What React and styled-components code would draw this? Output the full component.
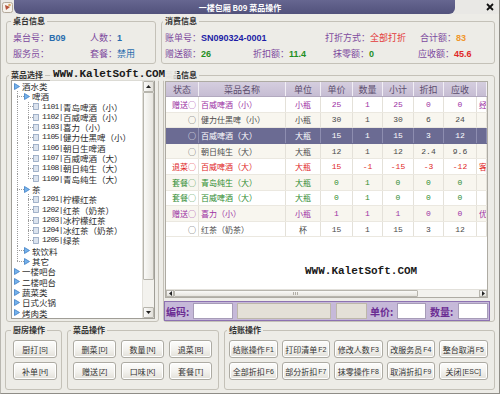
import React from 'react';
import styled, { createGlobalStyle } from 'styled-components';

const CJK = `"Noto Sans CJK SC", "Noto Sans", sans-serif`;
const SANS = `"Liberation Sans", "Noto Sans CJK SC", sans-serif`;
const MONO = `"Liberation Mono", "Noto Sans CJK SC", monospace`;

const GlobalStyle = createGlobalStyle`
  html, body { margin: 0; padding: 0; background: #edece7; }
  body { font-family: ${CJK}; color: #333; }
  * { box-sizing: border-box; }
`;

const tones = {
  gift: '#9b2fa3',
  normal: '#4a4a4a',
  back: '#e02626',
  set: '#2f8c2f',
  selected: '#ffffff',
};

const treeItems = [
  { lv: 0, label: '酒水类' },
  { lv: 1, label: '啤酒' },
  { lv: 2, code: '1101', label: '青岛啤酒（小）' },
  { lv: 2, code: '1102', label: '百威啤酒（小）' },
  { lv: 2, code: '1103', label: '喜力（小）' },
  { lv: 2, code: '1105', label: '健力仕黑啤（小）' },
  { lv: 2, code: '1106', label: '朝日生啤酒' },
  { lv: 2, code: '1107', label: '百威啤酒（大）' },
  { lv: 2, code: '1108', label: '朝日纯生（大）' },
  { lv: 2, code: '1109', label: '青岛纯生（大）', last: true },
  { lv: 1, label: '茶' },
  { lv: 2, code: '1201', label: '柠檬红茶' },
  { lv: 2, code: '1202', label: '红茶（奶茶）' },
  { lv: 2, code: '1203', label: '冰柠檬红茶' },
  { lv: 2, code: '1204', label: '冰红茶（奶茶）' },
  { lv: 2, code: '1205', label: '绿茶', last: true },
  { lv: 1, label: '软饮料' },
  { lv: 1, label: '其它', last: true },
  { lv: 0, label: '一楼吧台' },
  { lv: 0, label: '二楼吧台' },
  { lv: 0, label: '蔬菜类' },
  { lv: 0, label: '日式火锅' },
  { lv: 0, label: '烤肉类' },
];

const rows = [
  { st: '赠送', name: '百威啤酒（小）', unit: '小瓶', nums: ['25', '1', '25', '0', '0'], note: '经', tone: 'gift' },
  { st: '', name: '健力仕黑啤（小）', unit: '小瓶', nums: ['30', '1', '30', '6', '24'], tone: 'normal' },
  { st: '', name: '百威啤酒（大）', unit: '大瓶', nums: ['15', '1', '15', '3', '12'], tone: 'selected' },
  { st: '', name: '朝日纯生（大）', unit: '大瓶', nums: ['12', '1', '12', '2.4', '9.6'], tone: 'normal' },
  { st: '退菜', name: '百威啤酒（大）', unit: '大瓶', nums: ['15', '-1', '-15', '-3', '-12'], note: '客', tone: 'back' },
  { st: '套餐', name: '青岛纯生（大）', unit: '大瓶', nums: ['0', '1', '0', '0', '0'], tone: 'set' },
  { st: '套餐', name: '百威啤酒（大）', unit: '大瓶', nums: ['0', '1', '0', '0', '0'], tone: 'set' },
  { st: '赠送', name: '喜力（小）', unit: '小瓶', nums: ['1', '1', '1', '0', '0'], note: '优', tone: 'gift' },
  { st: '', name: '红茶（奶茶）', unit: '杯', nums: ['15', '1', '15', '3', '12'], tone: 'normal' },
];

const headers = ['状态', '菜品名称', '单位', '单价', '数量', '小计', '折扣', '应收', ''];

const payButtons = [
  ['结账操作', 'F1'], ['打印清单', 'F2'], ['修改人数', 'F3'], ['改服务员', 'F4'], ['整台取消', 'F5'],
  ['全部折扣', 'F6'], ['部分折扣', 'F7'], ['抹零操作', 'F8'], ['取消折扣', 'F9'], ['关闭', '[ESC]'],
];

const dishButtons = [
  ['删菜', '[D]'], ['数量', '[N]'], ['退菜', '[B]'],
  ['赠送', '[Z]'], ['口味', '[K]'], ['套餐', '[T]'],
];

function TreeLine({ item }) {
  if (item.lv === 0) {
    return (
      <TreeRow>
        <Caret viewBox="0 0 6 7"><polygon points="0.5,0.5 5.5,3.5 0.5,6.5" /></Caret>
        {item.label}
      </TreeRow>
    );
  }
  if (item.lv === 1) {
    return (
      <TreeRow>
        <Indent $w={10} $x={3} $branch $last={item.last} />
        <Caret viewBox="0 0 6 7"><polygon points="0.5,0.5 5.5,3.5 0.5,6.5" /></Caret>
        {item.label}
      </TreeRow>
    );
  }
  return (
    <TreeRow>
      <Indent $w={10} $x={3} />
      <Indent $w={9} $x={4} $branch $last={item.last} />
      <Doc viewBox="0 0 6 7"><rect x="0.5" y="0.5" width="5" height="6" /></Doc>
      <Code>{item.code}|</Code>
      {item.label}
    </TreeRow>
  );
}

export default function App() {
  return (
    <>
      <GlobalStyle />
      <Window>
        <TitleBar>
          <AppIcon>
            <svg width="11" height="11" viewBox="0 0 11 11">
              <rect x="0.5" y="0.5" width="10" height="10" rx="2" fill="#f6f2ec" stroke="#b3a99a" />
              <path d="M3 3 L8 5 L4 8 Z" fill="#b5523a" />
              <circle cx="7.5" cy="3" r="1.3" fill="#d9a25a" />
            </svg>
          </AppIcon>
          <TitleBand>一楼包厢 B09 菜品操作</TitleBand>
          <CloseArea>
            <svg width="8" height="8" viewBox="0 0 8 8">
              <path d="M1 1 L7 7 M7 1 L1 7" stroke="#111" strokeWidth="1.8" />
            </svg>
          </CloseArea>
        </TitleBar>

        <TopRow>
          <Group $w={150} $pad="6px 4px 0 6px">
            <Legend>桌台信息</Legend>
            <InfoRow>
              <Field $w={77}><Label>桌台号：</Label><Value $c="#2a6cae" $bold>B09</Value></Field>
              <Field><Label>人数：</Label><Value $c="#2a6cae" $bold>1</Value></Field>
            </InfoRow>
            <InfoRow>
              <Field $w={77}><Label>服务员：</Label></Field>
              <Field><Label>套餐：</Label><Value $c="#2a6cae">禁用</Value></Field>
            </InfoRow>
          </Group>
          <Group $grow $pad="6px 4px 0 3px">
            <Legend>消费信息</Legend>
            <InfoRow>
              <Field $w={160}><Label>账单号：</Label><Value $c="#1c1ca6" $bold>SN090324-0001</Value></Field>
              <Field $w={95}><Label>打折方式：</Label><Value $c="#e33a3a">全部打折</Value></Field>
              <Field><Label>合计额：</Label><Value $c="#f0962a" $bold>83</Value></Field>
            </InfoRow>
            <InfoRow>
              <Field $w={88}><Label>赠送额：</Label><Value $c="#1f8f1f" $bold>26</Value></Field>
              <Field $w={80}><Label>折扣额：</Label><Value $c="#1f8f1f" $bold>11.4</Value></Field>
              <Field $w={85}><Label>抹零额：</Label><Value $c="#1f8f1f" $bold>0</Value></Field>
              <Field><Label>应收额：</Label><Value $c="#e02828" $bold>45.6</Value></Field>
            </InfoRow>
          </Group>
        </TopRow>

        <MidRow>
          <Group $w={153} $pad="0 3px 2px 4px">
            <Legend>菜品选择</Legend>
            <Tree>
              <TreeList>
                {treeItems.map((item, i) => <TreeLine key={i} item={item} />)}
              </TreeList>
              <VScroll>
                <ScrollBtn><svg width="5" height="3" viewBox="0 0 5 3"><polygon points="0,3 2.5,0 5,3" fill="#222" /></svg></ScrollBtn>
                <VThumb />
                <Track />
                <ScrollBtn><svg width="5" height="3" viewBox="0 0 5 3"><polygon points="0,0 2.5,3 5,0" fill="#222" /></svg></ScrollBtn>
              </VScroll>
            </Tree>
          </Group>

          <Group $grow $pad="1px 6px 0 1px">
            <Legend><Faded>菜</Faded>品信息</Legend>
            <TableBox>
              <HeadRow>
                {headers.map((h, i) => <HeadCell key={i}>{h}</HeadCell>)}
              </HeadRow>
              {rows.map((r, i) => {
                const sel = r.tone === 'selected';
                return (
                  <Row key={i} $alt={i % 2 === 1} $sel={sel} $tone={r.tone}>
                    <Cell $sel={sel} $align="flex-end">{r.st}○</Cell>
                    <Cell $sel={sel} $align="flex-start">{r.name}</Cell>
                    <Cell $sel={sel}>{r.unit}</Cell>
                    {r.nums.map((n, j) => <Cell key={j} $sel={sel} $num>{n}</Cell>)}
                    <Cell $sel={sel} $align="flex-start">{r.note || ''}</Cell>
                  </Row>
                );
              })}
              <TableFill>
                <Mark>WWW.KaletSoft.COM</Mark>
              </TableFill>
              <HScroll>
                <HBtn><svg width="3" height="5" viewBox="0 0 3 5"><polygon points="3,0 0,2.5 3,5" fill="#222" /></svg></HBtn>
                <HThumb><Grip /></HThumb>
                <Track />
                <HBtn><svg width="3" height="5" viewBox="0 0 3 5"><polygon points="0,0 3,2.5 0,5" fill="#222" /></svg></HBtn>
              </HScroll>
            </TableBox>
            <InputBar>
              <BarLabel $w={27}>编码:</BarLabel>
              <BarInput $w={40} />
              <BarBox $w={94} $gap={4} />
              <BarBox $w={31} $gap={5} />
              <BarLabel $w={27} $gap={3}>单价:</BarLabel>
              <BarInput $w={29} />
              <BarLabel $w={28} $gap={4}>数量:</BarLabel>
              <BarInput $w={30} />
            </InputBar>
          </Group>
        </MidRow>

        <BottomRow>
          <Group $w={57} $pad="5px 4px 0 7px">
            <Legend>厨房操作</Legend>
            <ButtonGrid $cols="44px">
              <Btn>厨打<Key>[S]</Key></Btn>
              <Btn>补单<Key>[H]</Key></Btn>
            </ButtonGrid>
          </Group>
          <Group $w={152} $pad="5px 6px 0 5px">
            <Legend>菜品操作</Legend>
            <ButtonGrid $cols="repeat(3, 43px)" $gap={5}>
              {dishButtons.map(([t, k]) => <Btn key={t}>{t}<Key>{k}</Key></Btn>)}
            </ButtonGrid>
          </Group>
          <Group $grow $pad="5px 4px 0 4px">
            <Legend>结账操作</Legend>
            <ButtonGrid $cols="repeat(5, 48.5px)" $gap={4}>
              {payButtons.map(([t, k]) => <Btn key={t}>{t} <Key>{k}</Key></Btn>)}
            </ButtonGrid>
          </Group>
        </BottomRow>

        <Watermark>WWW.KaletSoft.COM</Watermark>
      </Window>
    </>
  );
}

const Window = styled.div`
  position: relative;
  display: flex;
  flex-direction: column;
  width: 500px;
  height: 394px;
  overflow: hidden;
  background: #edece7;
  border-left: 1px solid #b9b7b0;
  border-right: 1px solid #8f8d87;
  border-bottom: 1px solid #8f8d87;
`;

const TitleBar = styled.div`
  display: flex;
  flex-shrink: 0;
  height: 14px;
  margin-bottom: 2px;
  background: #e9e8e5;
`;

const AppIcon = styled.div`
  display: flex;
  align-items: center;
  justify-content: center;
  width: 13px;
`;

const TitleBand = styled.div`
  display: flex;
  align-items: center;
  justify-content: center;
  flex: 1;
  padding-left: 11px;
  border-radius: 0 0 6px 6px;
  background: linear-gradient(#666690, #52527c);
  color: #fff;
  font-size: 8px;
  font-weight: bold;
  white-space: nowrap;
`;

const CloseArea = styled.div`
  display: flex;
  align-items: center;
  justify-content: flex-end;
  width: 44px;
  padding-right: 5px;
`;

const TopRow = styled.div`
  display: flex;
  gap: 5px;
  height: 48px;
  flex-shrink: 0;
  padding: 0 4px 0 5px;
`;

const MidRow = styled.div`
  display: flex;
  gap: 4px;
  height: 252px;
  flex-shrink: 0;
  margin-top: 6px;
  padding: 0 4px 0 5px;
`;

const BottomRow = styled.div`
  display: flex;
  gap: 5px;
  height: 65px;
  flex-shrink: 0;
  margin-top: 3px;
  padding: 0 4px 0 4px;
`;

const Group = styled.fieldset`
  display: flex;
  flex-direction: column;
  gap: 5px;
  min-width: 0;
  margin: 0;
  width: ${p => (p.$w ? `${p.$w}px` : 'auto')};
  flex: ${p => (p.$grow ? '1' : 'none')};
  padding: ${p => p.$pad};
  border: 1px solid #c4c1b8;
  border-radius: 3px;
`;

const Legend = styled.legend`
  margin-left: -2px;
  padding: 0 2px;
  font-size: 8px;
  line-height: 10px;
  font-weight: bold;
  color: #333;
`;

const Faded = styled.span`
  color: #c9c7c2;
`;

const InfoRow = styled.div`
  display: flex;
  align-items: center;
  height: 11px;
  white-space: nowrap;
`;

const Field = styled.div`
  display: flex;
  align-items: center;
  width: ${p => (p.$w ? `${p.$w}px` : 'auto')};
  flex: ${p => (p.$w ? 'none' : '1')};
`;

const Label = styled.span`
  font-size: 9px;
  color: #7d4a9e;
`;

const Value = styled.span`
  font-family: ${SANS};
  font-size: 9px;
  font-weight: ${p => (p.$bold ? 'bold' : 'normal')};
  color: ${p => p.$c};
`;

const Tree = styled.div`
  display: flex;
  height: 239px;
  background: #fff;
  border: 1px solid #a09e97;
`;

const TreeList = styled.div`
  flex: 1;
  overflow: hidden;
  padding-left: 2px;
`;

const TreeRow = styled.div`
  display: flex;
  align-items: center;
  height: 10.3px;
  overflow: hidden;
  font-size: 8.5px;
  line-height: 10.3px;
  color: #2a2a2a;
  white-space: nowrap;
`;

const dotV = 'repeating-linear-gradient(to bottom, #9c9c9c 0 1px, transparent 1px 2px)';
const dotH = 'repeating-linear-gradient(to right, #9c9c9c 0 1px, transparent 1px 2px)';

const Indent = styled.span`
  flex-shrink: 0;
  align-self: stretch;
  width: ${p => p.$w}px;
  background-image: ${p => (p.$branch ? `${dotV}, ${dotH}` : dotV)};
  background-repeat: no-repeat;
  background-size: ${p => `1px ${p.$last ? '50%' : '100%'}${p.$branch ? `, ${p.$w - p.$x}px 1px` : ''}`};
  background-position: ${p => `${p.$x}px 0${p.$branch ? `, ${p.$x}px 50%` : ''}`};
`;

const Caret = styled.svg`
  flex-shrink: 0;
  width: 6px;
  height: 7px;
  margin-right: 2px;
  fill: #74b2ec;
  stroke: #3f7fc4;
  stroke-width: 0.8;
`;

const Doc = styled.svg`
  flex-shrink: 0;
  width: 6px;
  height: 7px;
  margin-right: 3px;
  fill: #dbe3ee;
  stroke: #8fa2bd;
  stroke-width: 0.8;
`;

const Code = styled.span`
  font-family: ${MONO};
  font-size: 8px;
  letter-spacing: -0.6px;
`;

const VScroll = styled.div`
  display: flex;
  flex-direction: column;
  width: 12px;
  background: #f3f2ee;
  border-left: 1px solid #e2e0da;
`;

const ScrollBtn = styled.div`
  display: flex;
  align-items: center;
  justify-content: center;
  height: 11px;
  background: linear-gradient(to right, #fbfbfa, #e2e0da);
  border: 1px solid #b7b5ad;
  border-radius: 1px;
`;

const VThumb = styled.div`
  height: 188px;
  background: linear-gradient(to right, #f9f9f7, #e6e4de);
  border: 1px solid #b7b5ad;
  border-radius: 1px;
`;

const Track = styled.div`
  flex: 1;
  background: #f3f2ee;
`;

const cols = '33px 87px 35px 32px 30px 31px 30px 33px 1fr';

const TableBox = styled.div`
  display: flex;
  flex-direction: column;
  height: 217px;
  background: #fff;
  border: 1px solid #aeaba3;
`;

const HeadRow = styled.div`
  display: grid;
  grid-template-columns: ${cols};
  flex-shrink: 0;
  height: 15px;
  background: linear-gradient(#d5cedf, #c6bdd3);
  border-bottom: 1px solid #b2a9bf;
`;

const HeadCell = styled.div`
  display: flex;
  align-items: center;
  justify-content: center;
  font-size: 9px;
  color: #5c4e6e;
  border-right: 1px solid #f1eef5;
`;

const Row = styled.div`
  display: grid;
  grid-template-columns: ${cols};
  flex-shrink: 0;
  height: 15.6px;
  background: ${p => (p.$sel ? '#6b6b93' : p.$alt ? '#f8f6ef' : '#ffffff')};
  color: ${p => tones[p.$tone]};
  border-bottom: 1px solid ${p => (p.$sel ? '#6b6b93' : '#ebe8e0')};
`;

const Cell = styled.div`
  display: flex;
  align-items: center;
  justify-content: ${p => p.$align || 'center'};
  padding: 0 2px;
  overflow: hidden;
  font-family: ${p => (p.$num ? MONO : CJK)};
  font-size: 8px;
  white-space: nowrap;
  border-right: 1px solid ${p => (p.$sel ? '#8d8db0' : '#e4e1d9')};
`;

const TableFill = styled.div`
  display: flex;
  align-items: flex-end;
  flex: 1;
  padding: 0 0 11px 139px;
`;

const Mark = styled.span`
  font-family: ${MONO};
  font-size: 11px;
  line-height: 14px;
  font-weight: bold;
  color: #1a1a1a;
`;

const HScroll = styled.div`
  display: flex;
  flex-shrink: 0;
  height: 8px;
  background: #f3f2ee;
  border-top: 1px solid #e2e0da;
`;

const HBtn = styled.div`
  display: flex;
  align-items: center;
  justify-content: center;
  width: 8px;
  background: linear-gradient(#fbfbfa, #e2e0da);
  border: 1px solid #b7b5ad;
`;

const HThumb = styled.div`
  display: flex;
  align-items: center;
  justify-content: center;
  width: 244px;
  background: linear-gradient(#f9f9f7, #e6e4de);
  border: 1px solid #b7b5ad;
  border-radius: 1px;
`;

const Grip = styled.div`
  width: 6px;
  height: 3px;
  background: repeating-linear-gradient(to right, #b1aea6 0 1px, transparent 1px 2px);
`;

const InputBar = styled.div`
  display: flex;
  align-items: center;
  flex-shrink: 0;
  width: 326px;
  height: 20px;
  margin: -2px 0 0 -1px;
  padding-left: 1px;
  background: #c6b9d9;
  border: 1px solid #8d72b1;
`;

const BarLabel = styled.span`
  width: ${p => p.$w}px;
  margin-left: ${p => p.$gap || 0}px;
  font-size: 10px;
  font-weight: bold;
  color: #6b2c93;
  white-space: nowrap;
`;

const BarInput = styled.div`
  width: ${p => p.$w}px;
  height: 16px;
  background: #fff;
  border: 1px solid #a79cb8;
`;

const BarBox = styled.div`
  width: ${p => p.$w}px;
  height: 16px;
  margin-left: ${p => p.$gap || 0}px;
  background: #e4e0d7;
  border: 1px solid #bdb7aa;
`;

const ButtonGrid = styled.div`
  display: grid;
  grid-template-columns: ${p => p.$cols};
  grid-auto-rows: 18px;
  gap: 4px ${p => p.$gap || 0}px;
`;

const Btn = styled.button`
  display: flex;
  align-items: center;
  justify-content: center;
  padding: 0;
  border: 1px solid #adaba3;
  border-radius: 3px;
  background: linear-gradient(#fdfdfc, #f2f1ed 55%, #e2e0d9);
  box-shadow: inset 0 0 0 1px #ffffff;
  color: #333;
  font-family: ${CJK};
  font-size: 8px;
  white-space: nowrap;
`;

const Key = styled.span`
  font-family: ${SANS};
  font-size: 7px;
  margin-left: 1px;
`;

const Watermark = styled.div`
  position: absolute;
  left: 49px;
  top: 67px;
  height: 14px;
  padding: 0 12px 0 3px;
  font-family: ${MONO};
  font-size: 11px;
  line-height: 14px;
  font-weight: bold;
  color: #1a1a1a;
  background: rgba(237, 236, 231, 0.78);
`;
